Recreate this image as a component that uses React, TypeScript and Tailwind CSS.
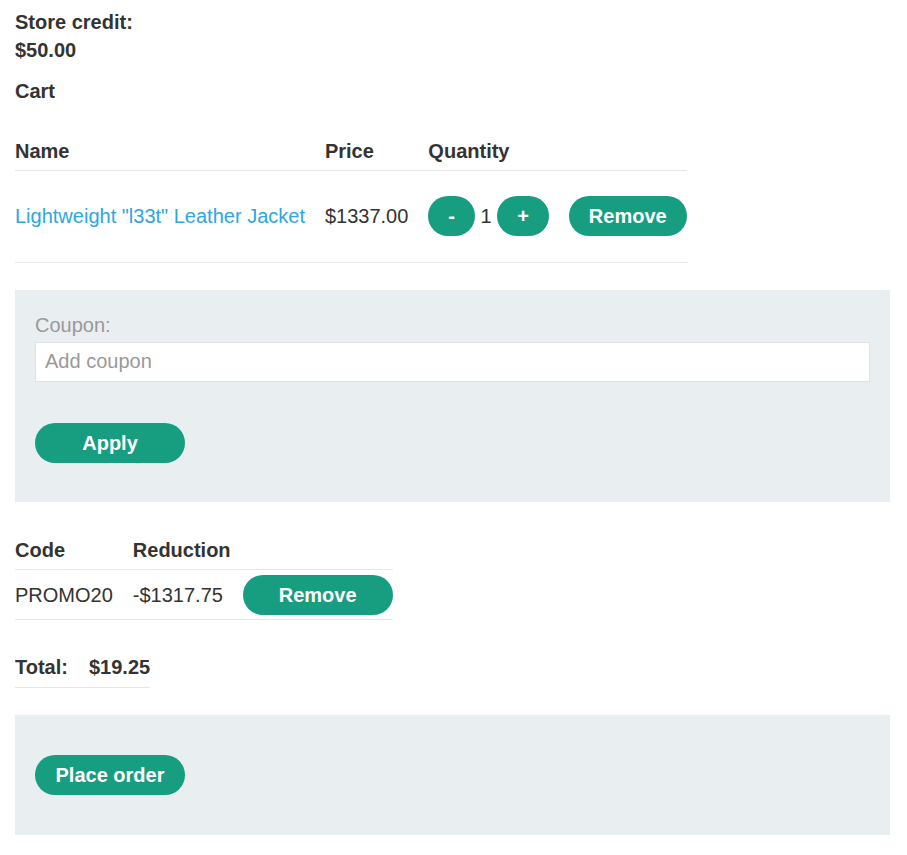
import { useState } from 'react';

const btn =
  'inline-flex items-center justify-center h-10 px-5 rounded-full bg-[#179d80] text-white font-bold text-[20px] leading-none';

export default function App() {
  const [qty, setQty] = useState(1);
  const [coupon, setCoupon] = useState('');

  return (
    <div className="min-h-screen bg-white pl-[15px] pr-[17px] pt-2 pb-5 text-[20px] leading-[28px] text-[#333332] font-['Liberation_Sans',Arial,sans-serif]">
      {/* Store credit */}
      <p className="font-bold w-[140px]">Store credit: $50.00</p>
      <p className="font-bold mt-[13px]">Cart</p>

      {/* Cart table */}
      <table className="mt-[27px] border-collapse">
        <thead>
          <tr className="border-b border-[#e6e6e6] h-[38px] text-left">
            <th className="pr-5 font-bold">Name</th>
            <th className="pr-5 font-bold">Price</th>
            <th className="pr-5 font-bold">Quantity</th>
            <th></th>
          </tr>
        </thead>
        <tbody>
          <tr className="border-b border-[#e6e6e6] h-[92px]">
            <td className="pr-5">
              <a href="#" className="text-[#2ea6df]">Lightweight "l33t" Leather Jacket</a>
            </td>
            <td className="pr-5">$1337.00</td>
            <td className="pr-5">
              <div className="flex items-center gap-[5.5px]">
                <button className={btn} onClick={() => setQty(Math.max(0, qty - 1))}>-</button>
                <span>{qty}</span>
                <button className={btn} onClick={() => setQty(qty + 1)}>+</button>
              </div>
            </td>
            <td>
              <button className={btn}>Remove</button>
            </td>
          </tr>
        </tbody>
      </table>

      {/* Coupon form */}
      <div className="mt-[27px] bg-[#e9eef1] px-5 pt-[21px] pb-[39px]">
        <label className="block text-[#999]">Coupon:</label>
        <input
          value={coupon}
          onChange={(e) => setCoupon(e.target.value)}
          placeholder="Add coupon"
          className="mt-[3px] block w-full h-10 bg-white border border-[#dfe3e5] px-[9px] text-[20px] outline-none placeholder:text-[#999]"
        />
        <button className={`${btn} min-w-[150px] mt-[41px]`}>Apply</button>
      </div>

      {/* Applied codes */}
      <table className="mt-[30px] border-collapse">
        <thead>
          <tr className="border-b border-[#e6e6e6] h-[38px] text-left">
            <th className="pr-5 font-bold">Code</th>
            <th className="pr-3 font-bold">Reduction</th>
            <th></th>
          </tr>
        </thead>
        <tbody>
          <tr className="border-b border-[#e6e6e6] h-[50px]">
            <td className="pr-5">PROMO20</td>
            <td className="pr-3">-$1317.75</td>
            <td>
              <button className={`${btn} min-w-[150px]`}>Remove</button>
            </td>
          </tr>
        </tbody>
      </table>

      {/* Total */}
      <table className="mt-7 border-collapse">
        <tbody>
          <tr className="border-b border-[#e6e6e6] h-[39px] text-left">
            <th className="pr-[21px] font-bold">Total:</th>
            <th className="font-bold">$19.25</th>
          </tr>
        </tbody>
      </table>

      {/* Checkout */}
      <div className="mt-[27px] bg-[#e9eef1] px-5 py-10">
        <button className={`${btn} min-w-[150px]`}>Place order</button>
      </div>
    </div>
  );
}
